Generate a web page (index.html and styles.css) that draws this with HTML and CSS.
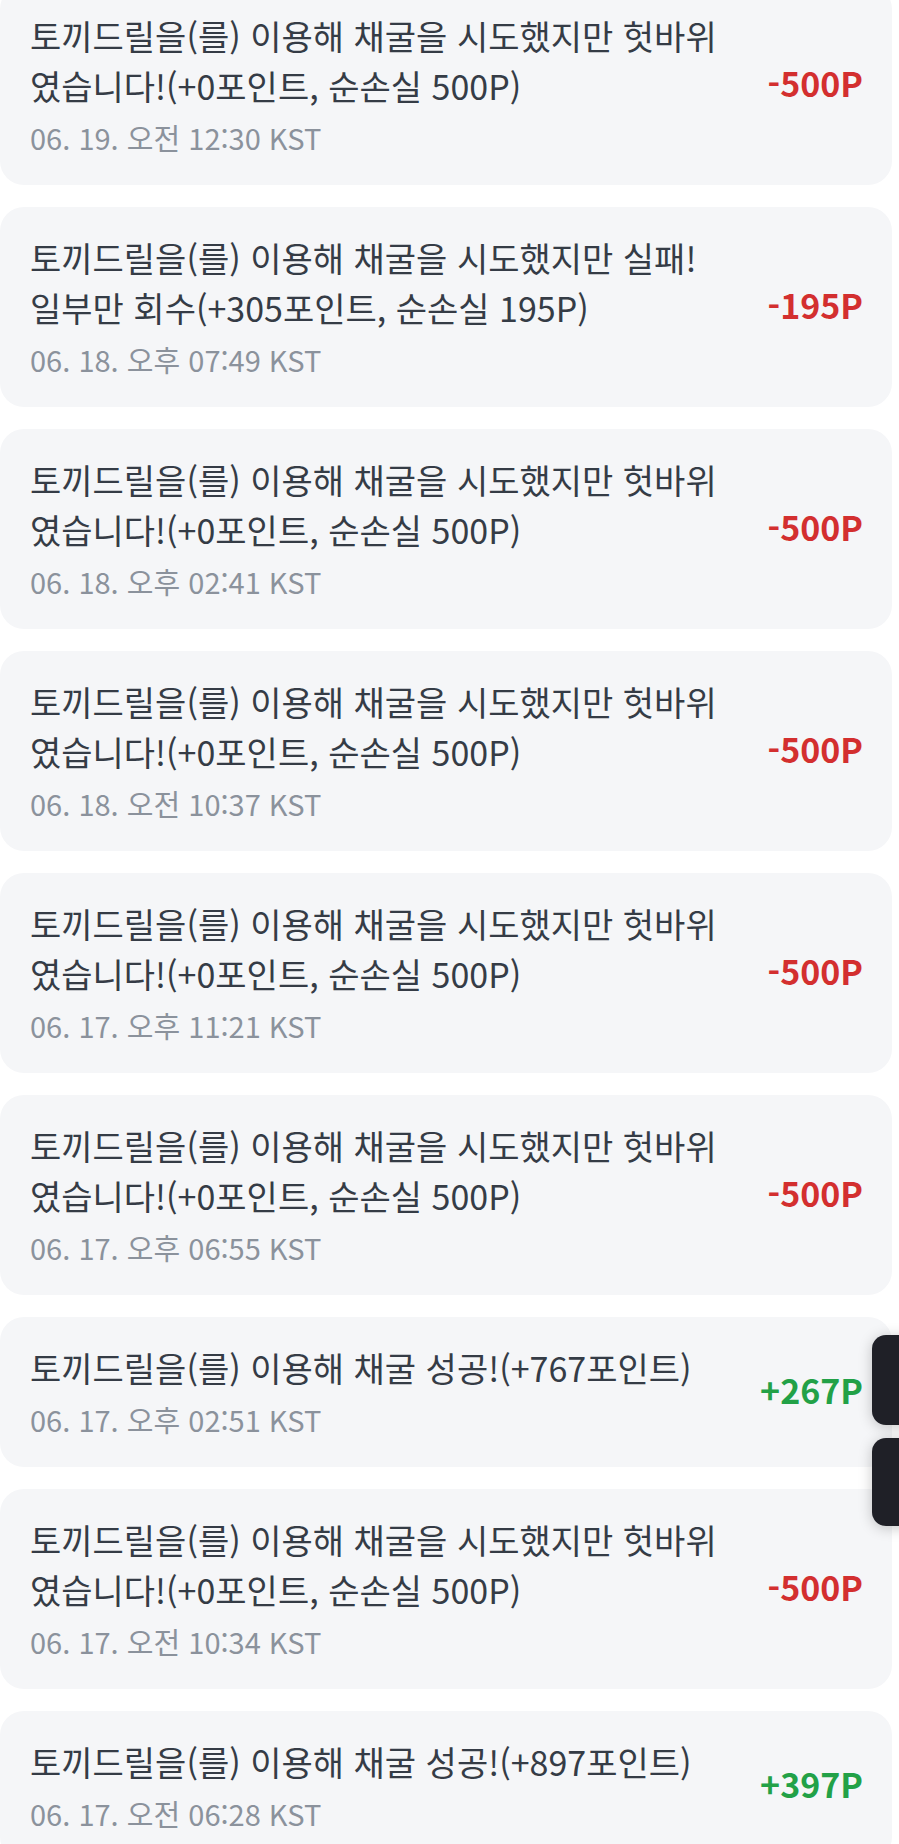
FILE: index.html
```html
<!DOCTYPE html>
<html lang="ko">
<head>
<meta charset="utf-8">
<title>포인트 내역</title>
<link rel="stylesheet" href="styles.css">
</head>
<body>
<div class="list">
  <div class="item">
    <div class="info">
      <p class="title">토끼드릴을(를) 이용해 채굴을 시도했지만 헛바위<br>였습니다!(+0포인트, 순손실 500P)</p>
      <p class="date">06. 19. 오전 12:30 KST</p>
    </div>
    <div class="amount minus">-500P</div>
  </div>
  <div class="item">
    <div class="info">
      <p class="title">토끼드릴을(를) 이용해 채굴을 시도했지만 실패!<br>일부만 회수(+305포인트, 순손실 195P)</p>
      <p class="date">06. 18. 오후 07:49 KST</p>
    </div>
    <div class="amount minus">-195P</div>
  </div>
  <div class="item">
    <div class="info">
      <p class="title">토끼드릴을(를) 이용해 채굴을 시도했지만 헛바위<br>였습니다!(+0포인트, 순손실 500P)</p>
      <p class="date">06. 18. 오후 02:41 KST</p>
    </div>
    <div class="amount minus">-500P</div>
  </div>
  <div class="item">
    <div class="info">
      <p class="title">토끼드릴을(를) 이용해 채굴을 시도했지만 헛바위<br>였습니다!(+0포인트, 순손실 500P)</p>
      <p class="date">06. 18. 오전 10:37 KST</p>
    </div>
    <div class="amount minus">-500P</div>
  </div>
  <div class="item">
    <div class="info">
      <p class="title">토끼드릴을(를) 이용해 채굴을 시도했지만 헛바위<br>였습니다!(+0포인트, 순손실 500P)</p>
      <p class="date">06. 17. 오후 11:21 KST</p>
    </div>
    <div class="amount minus">-500P</div>
  </div>
  <div class="item">
    <div class="info">
      <p class="title">토끼드릴을(를) 이용해 채굴을 시도했지만 헛바위<br>였습니다!(+0포인트, 순손실 500P)</p>
      <p class="date">06. 17. 오후 06:55 KST</p>
    </div>
    <div class="amount minus">-500P</div>
  </div>
  <div class="item">
    <div class="info">
      <p class="title">토끼드릴을(를) 이용해 채굴 성공!(+767포인트)</p>
      <p class="date">06. 17. 오후 02:51 KST</p>
    </div>
    <div class="amount plus">+267P</div>
  </div>
  <div class="item">
    <div class="info">
      <p class="title">토끼드릴을(를) 이용해 채굴을 시도했지만 헛바위<br>였습니다!(+0포인트, 순손실 500P)</p>
      <p class="date">06. 17. 오전 10:34 KST</p>
    </div>
    <div class="amount minus">-500P</div>
  </div>
  <div class="item">
    <div class="info">
      <p class="title">토끼드릴을(를) 이용해 채굴 성공!(+897포인트)</p>
      <p class="date">06. 17. 오전 06:28 KST</p>
    </div>
    <div class="amount plus">+397P</div>
  </div>
</div>
<div class="fab fab-top"></div>
<div class="fab fab-bottom"></div>
</body>
</html>
```

FILE: styles.css
```css
html, body {
  margin: 0;
  padding: 0;
  background: #ffffff;
  overflow: hidden;
}

body {
  font-family: "Noto Sans CJK KR", "Noto Sans", sans-serif;
  color: #353c46;
}

.list {
  display: flex;
  flex-direction: column;
  gap: 22px;
  width: 892px;
  margin-top: -15px;
}

.item {
  display: flex;
  align-items: center;
  background: #f5f6f8;
  border-radius: 24px;
  padding: 26px 29px 28px 30px;
}

.info {
  flex: 1;
  min-width: 0;
}

.title {
  margin: 0;
  font-size: 34px;
  line-height: 50px;
  color: #353c46;
  white-space: nowrap;
}

.date {
  margin: 6px 0 0;
  font-size: 29px;
  line-height: 40px;
  color: #8b929c;
}

.amount {
  font-size: 34px;
  font-weight: 700;
  line-height: 40px;
  white-space: nowrap;
  margin-bottom: 2px;
}

.minus {
  color: #d32f2f;
}

.plus {
  color: #22a147;
}

.fab {
  position: absolute;
  left: 872px;
  width: 60px;
  background: #1f2027;
  border-radius: 14px;
  box-shadow: 0 2px 14px rgba(0, 0, 0, 0.22);
}

.fab-top {
  top: 1335px;
  height: 90px;
}

.fab-bottom {
  top: 1438px;
  height: 88px;
}
```
